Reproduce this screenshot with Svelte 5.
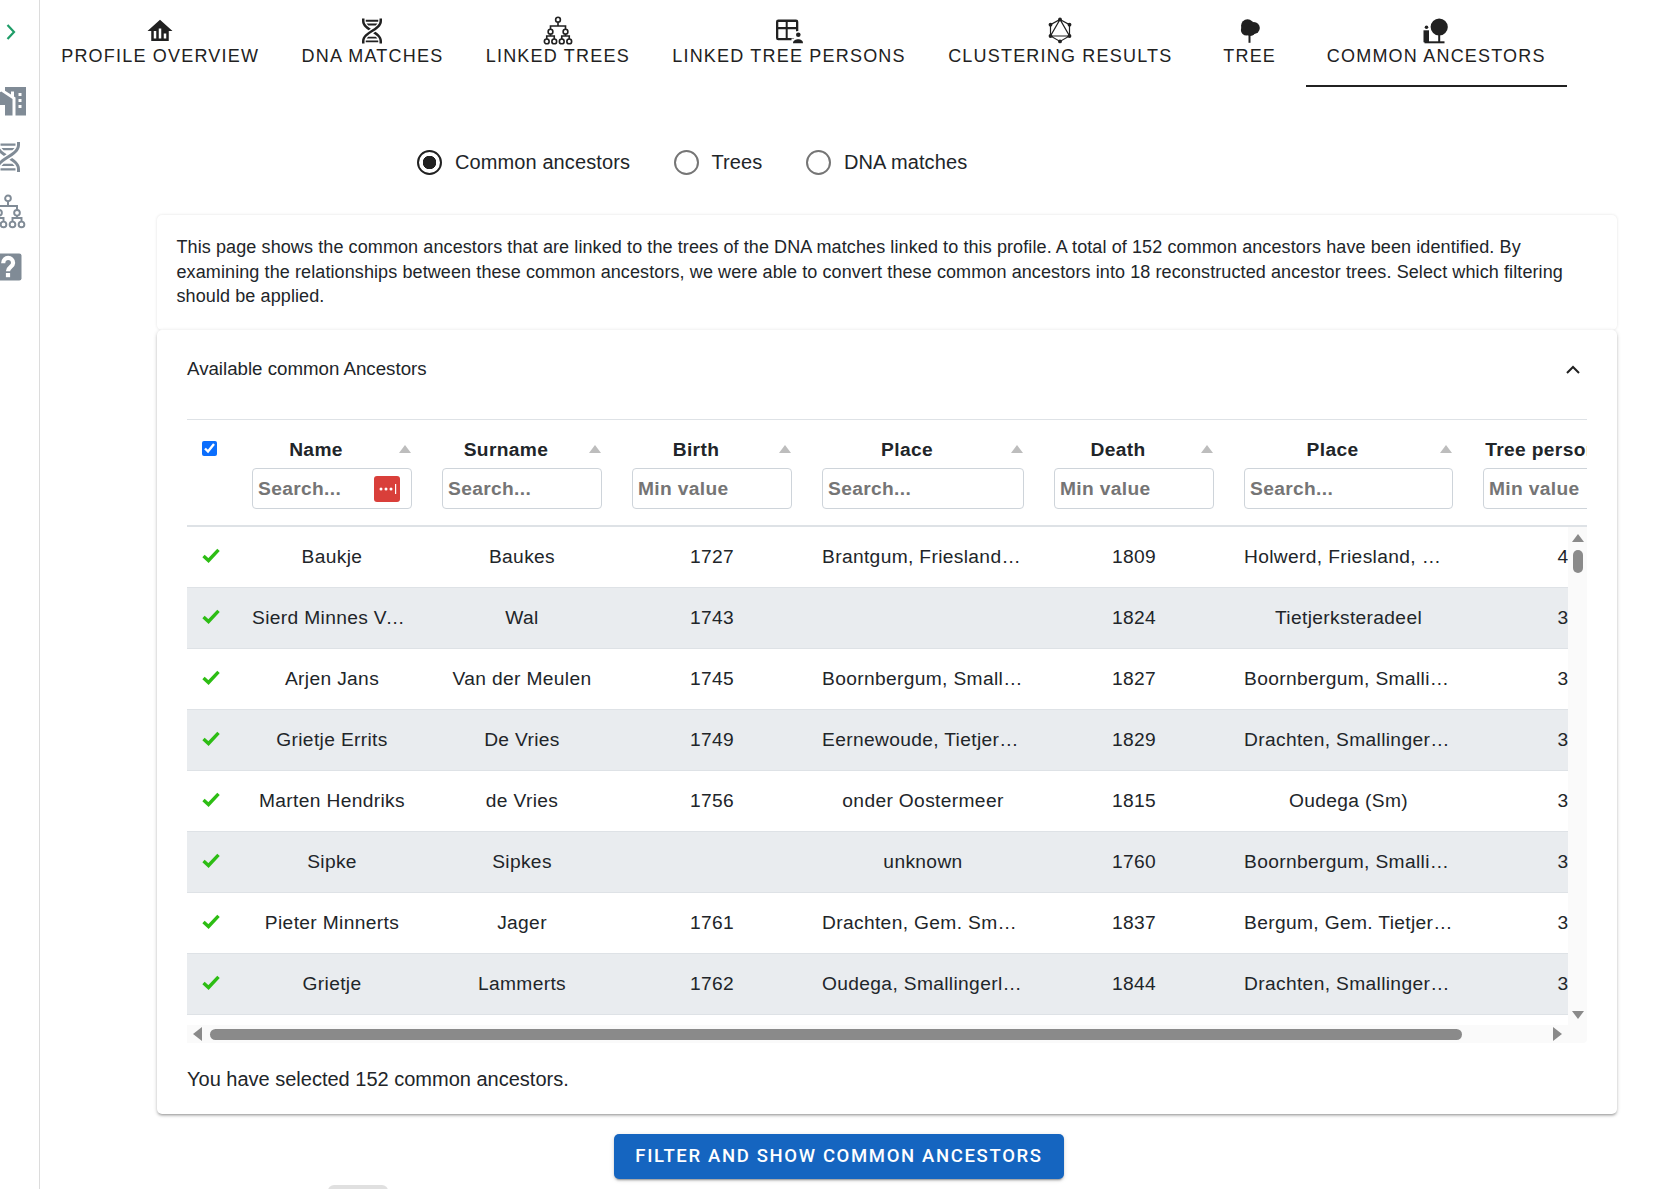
<script lang="ts">
  type Row = { name: string; surname: string; birth: string; bplace: string; death: string; dplace: string; persons: number };

  const tabs = [
    { label: 'PROFILE OVERVIEW', icon: 'home' },
    { label: 'DNA MATCHES', icon: 'dna' },
    { label: 'LINKED TREES', icon: 'family' },
    { label: 'LINKED TREE PERSONS', icon: 'table' },
    { label: 'CLUSTERING RESULTS', icon: 'graph' },
    { label: 'TREE', icon: 'tree' },
    { label: 'COMMON ANCESTORS', icon: 'ancestor' }
  ];

  const filters = ['Common ancestors', 'Trees', 'DNA matches'];
  let filter = $state('Common ancestors');
  let allSelected = $state(true);

  const columns = [
    { label: 'Name', hint: 'Search...' },
    { label: 'Surname', hint: 'Search...' },
    { label: 'Birth', hint: 'Min value' },
    { label: 'Place', hint: 'Search...' },
    { label: 'Death', hint: 'Min value' },
    { label: 'Place', hint: 'Search...' },
    { label: 'Tree persons', hint: 'Min value' }
  ];

  const rows: Row[] = [
    { name: 'Baukje', surname: 'Baukes', birth: '1727', bplace: 'Brantgum, Friesland, Nederland', death: '1809', dplace: 'Holwerd, Friesland, Nederland', persons: 4 },
    { name: 'Sierd Minnes Van der Wal', surname: 'Wal', birth: '1743', bplace: '', death: '1824', dplace: 'Tietjerksteradeel', persons: 3 },
    { name: 'Arjen Jans', surname: 'Van der Meulen', birth: '1745', bplace: 'Boornbergum, Smallingerland', death: '1827', dplace: 'Boornbergum, Smallingerland', persons: 3 },
    { name: 'Grietje Errits', surname: 'De Vries', birth: '1749', bplace: 'Eernewoude, Tietjerksteradeel', death: '1829', dplace: 'Drachten, Smallingerland', persons: 3 },
    { name: 'Marten Hendriks', surname: 'de Vries', birth: '1756', bplace: 'onder Oostermeer', death: '1815', dplace: 'Oudega (Sm)', persons: 3 },
    { name: 'Sipke', surname: 'Sipkes', birth: '', bplace: 'unknown', death: '1760', dplace: 'Boornbergum, Smallingerland', persons: 3 },
    { name: 'Pieter Minnerts', surname: 'Jager', birth: '1761', bplace: 'Drachten, Gem. Smallingerland', death: '1837', dplace: 'Bergum, Gem. Tietjerksteradeel', persons: 3 },
    { name: 'Grietje', surname: 'Lammerts', birth: '1762', bplace: 'Oudega, Smallingerland', death: '1844', dplace: 'Drachten, Smallingerland', persons: 3 }
  ];
</script>

{#snippet icon(name: string)}
  {#if name === 'home'}
    <svg viewBox="0 0 24 24"><path d="M12 3L2 12H5V20H19V12H22L12 3M9 18H7V12H9V18M13 18H11V10H13V18M17 18H15V14H17V18Z" /></svg>
  {:else if name === 'city'}
    <svg viewBox="0 0 24 24"><path d="M0,21V10L7.5,5L15,10V21H10V14H5V21H0M24,2V21H17V8.93L16,8.31V5H14V7.07L10,4.57V2H24M21,14H19V16H21V14M21,10H19V12H21V10M21,6H19V8H21V6Z" /></svg>
  {:else if name === 'dna'}
    <svg viewBox="0 0 24 24"><path d="M4 2H6V4C6 5.44 6.68 6.61 7.88 7.78C8.74 8.61 9.89 9.41 11.09 10.2L9.26 11.39C8.27 10.72 7.31 10 6.5 9.21C5.07 7.82 4 6.1 4 4V2M18 2H20V4C20 6.1 18.93 7.82 17.5 9.21C16.09 10.59 14.29 11.73 12.54 12.84C10.79 13.96 9.09 15.05 7.88 16.22C6.68 17.39 6 18.56 6 20V22H4V20C4 17.9 5.07 16.18 6.5 14.79C7.91 13.41 9.71 12.27 11.46 11.16C13.21 10.04 14.91 8.95 16.12 7.78C17.32 6.61 18 5.44 18 4V2M14.74 12.61C15.73 13.28 16.69 14 17.5 14.79C18.93 16.18 20 17.9 20 20V22H18V20C18 18.56 17.32 17.39 16.12 16.22C15.26 15.39 14.11 14.59 12.91 13.8L14.74 12.61M7 3H17V4L16.94 4.5H7.06L7 4V3M7.68 6H16.32C16.08 6.34 15.8 6.69 15.42 7.06L14.91 7.5H9.07L8.58 7.06C8.2 6.69 7.92 6.34 7.68 6M9.07 16.5H14.93L15.42 16.94C15.8 17.31 16.08 17.66 16.32 18H7.68C7.92 17.66 8.2 17.31 8.58 16.94L9.07 16.5M7.06 19.5H16.94L17 20V21H7V20L7.06 19.5Z" /></svg>
  {:else if name === 'family'}
    <svg viewBox="0 0 24 24" class="outline">
      <circle cx="12" cy="2.9" r="1.9" />
      <circle cx="6" cy="12.5" r="1.9" />
      <circle cx="18" cy="12.5" r="1.9" />
      <circle cx="3" cy="20.3" r="1.9" />
      <circle cx="9" cy="20.3" r="1.9" />
      <circle cx="15" cy="20.3" r="1.9" />
      <circle cx="21" cy="20.3" r="1.9" />
      <path d="M12 4.8V8M6 10.6V8H18V10.6M6 14.4V16M3 18.4V16H9V18.4M18 14.4V16M15 18.4V16H21V18.4" />
    </svg>
  {:else if name === 'table'}
    <svg viewBox="0 0 30 30">
      <path fill-rule="evenodd" d="M4.3 3.5H22A2.3 2.3 0 0 1 24.3 5.8V22A2.3 2.3 0 0 1 22 24.3H4.3A2.3 2.3 0 0 1 2 22V5.800A2.3 2.3 0 0 1 4.3 3.5ZM4.3 6V11H11.700V6ZM13.700 6V11H22V6ZM4.300 13.300V21.900H11.700V13.300ZM13.700 13.300V21.900H22V13.300Z" />
      <circle cx="24.300" cy="20" r="5" fill="#fff" />
      <rect x="17.500" y="22.500" width="12.500" height="6" fill="#fff" />
      <circle cx="24.300" cy="18.700" r="2.300" />
      <path d="M19 27.200C19 24.200 21.800 23.200 24.200 23.200C26.600 23.200 29 24.200 29 27.200Z" />
    </svg>
  {:else if name === 'graph'}
    <svg viewBox="0 0 30 30" class="graph">
      <path d="M15 3.400L24.500 8.700V20L15 25.400L5.500 20V8.700ZM15 3.400L24.500 20H5.500Z" />
      <circle cx="15" cy="3.400" r="1.900" />
      <circle cx="24.500" cy="8.700" r="1.900" />
      <circle cx="24.500" cy="20" r="1.900" />
      <circle cx="15" cy="25.400" r="1.900" />
      <circle cx="5.500" cy="20" r="1.900" />
      <circle cx="5.500" cy="8.700" r="1.900" />
    </svg>
  {:else if name === 'tree'}
    <svg viewBox="0 0 30 30">
      <circle cx="12.500" cy="9.800" r="6.500" />
      <circle cx="18.800" cy="12" r="6" />
      <circle cx="11.500" cy="14" r="5.600" />
      <circle cx="15.500" cy="15" r="5" />
      <rect x="13.500" y="18" width="2" height="8.800" />
    </svg>
  {:else if name === 'ancestor'}
    <svg viewBox="0 0 30 30">
      <circle cx="18.200" cy="11" r="8.600" />
      <rect x="17.200" y="17" width="2" height="9" />
      <rect x="3.500" y="25.300" width="20" height="2" />
      <circle cx="5.500" cy="11.300" r="1.800" />
      <rect x="2.500" y="14.300" width="5.500" height="12" />
    </svg>
  {:else if name === 'help'}
    <svg viewBox="0 0 24 24">
      <rect x="3" y="3" width="18" height="18" rx="1.500" />
      <path class="mark" d="M8.800 9.500C8.800 4.600 15.400 5 15.400 9.300C15.400 11.900 12 11.900 12 14.800" />
      <rect class="dot" x="10.600" y="16" width="2.800" height="2.800" />
    </svg>
  {/if}
{/snippet}

<div class="page">
  <aside class="side">
    <svg class="chevron" viewBox="0 0 10 16"><path d="M1.500 1L8 8L1.500 15" /></svg>
    <nav class="side-icons">
      <span class="side-icon">{@render icon('city')}</span>
      <span class="side-icon">{@render icon('dna')}</span>
      <span class="side-icon">{@render icon('family')}</span>
      <span class="side-icon">{@render icon('help')}</span>
    </nav>
  </aside>

  <main class="main">
    <div class="tabs">
      {#each tabs as tab, i}
        <div class="tab" class:active={i === tabs.length - 1}>
          {@render icon(tab.icon)}
          <span>{tab.label}</span>
        </div>
      {/each}
    </div>

    <div class="filters">
      {#each filters as f}
        <label class="radio">
          <input type="radio" name="filter" value={f} bind:group={filter} />
          {f}
        </label>
      {/each}
    </div>

    <section class="card intro">
      This page shows the common ancestors that are linked to the trees of the DNA matches linked to this profile. A total of 152 common ancestors have been identified. By examining the relationships between these common ancestors, we were able to convert these common ancestors into 18 reconstructed ancestor trees. Select which filtering should be applied.
    </section>

    <section class="card panel">
      <div class="panel-head">
        <span>Available common Ancestors</span>
        <svg class="collapse" viewBox="0 0 14 9"><path d="M1 8L7 2L13 8" /></svg>
      </div>

      <div class="grid">
        <div class="head">
          <div class="select-head">
            <input type="checkbox" bind:checked={allSelected} />
          </div>
          {#each columns as col, i}
            <div class="th">
              <div class="th-label">
                <b>{col.label}</b>
                <i class="sort"></i>
              </div>
              <div class="search">
                <input placeholder={col.hint} />
                {#if i === 0}
                  <svg class="lastpass" viewBox="0 0 26 26">
                    <rect width="26" height="26" rx="3" />
                    <circle cx="7" cy="13" r="1.500" />
                    <circle cx="12" cy="13" r="1.500" />
                    <circle cx="17" cy="13" r="1.500" />
                    <rect x="21" y="8" width="1.200" height="10" />
                  </svg>
                {/if}
              </div>
            </div>
          {/each}
        </div>

        <div class="body">
          <div class="rows">
            {#each rows as row, i}
              <div class="row" class:odd={i % 2 === 1}>
                <div class="td tick">
                  <svg viewBox="0 0 18 15"><path d="M1.500 8L6.500 12.500L16.500 1.800" /></svg>
                </div>
                <div class="td">{row.name}</div>
                <div class="td">{row.surname}</div>
                <div class="td">{row.birth}</div>
                <div class="td">{row.bplace}</div>
                <div class="td">{row.death}</div>
                <div class="td">{row.dplace}</div>
                <div class="td">{row.persons}</div>
              </div>
            {/each}
          </div>
          <div class="vscroll">
            <i class="arrow up"></i>
            <i class="vthumb"></i>
            <i class="arrow down"></i>
          </div>
        </div>

        <div class="hscroll">
          <i class="arrow left"></i>
          <i class="hthumb"></i>
          <i class="arrow right"></i>
        </div>
      </div>

      <p class="summary">You have selected 152 common ancestors.</p>
    </section>

    <button class="apply">FILTER AND SHOW COMMON ANCESTORS</button>
    <div class="chip"></div>
  </main>
</div>

<style>
  :global(body) {
    margin: 0;
    background: #fff;
    overflow: hidden;
  }

  .page {
    display: flex;
    height: 100vh;
    overflow: hidden;
    font-family: "Liberation Sans", Arial, sans-serif;
    color: #212529;
  }

  .side {
    flex: 0 0 39px;
    border-right: 1px solid #dcdcdc;
    overflow: hidden;
  }

  .chevron {
    display: block;
    width: 10px;
    height: 16px;
    margin: 24px 0 0 5.500px;
    fill: none;
    stroke: #1f9d68;
    stroke-width: 2.200;
  }

  .side-icons {
    display: flex;
    flex-direction: column;
    gap: 19px;
    margin: 44px 0 0 -10px;
    fill: #808b96;
  }

  .side-icon {
    display: block;
    width: 36px;
    height: 36px;
    color: #808b96;
  }

  .side-icon svg {
    display: block;
    width: 36px;
    height: 36px;
  }

  .main {
    flex: 1;
    min-width: 0;
  }

  .tabs {
    display: flex;
    height: 87px;
  }

  .tab {
    box-sizing: border-box;
    min-width: 112px;
    padding: 16px 21.200px 0;
    display: flex;
    flex-direction: column;
    align-items: center;
    font-size: 18px;
    line-height: 18px;
    letter-spacing: 1.200px;
    color: #212121;
    fill: #212121;
    white-space: nowrap;
  }

  .tab span {
    margin-top: 1px;
  }

  .tab.active {
    border-bottom: 2.500px solid #212121;
  }

  .tab svg {
    width: 30px;
    height: 30px;
    display: block;
    flex: none;
  }

  .outline {
    fill: none;
    stroke: currentColor;
    stroke-width: 1.300;
  }

  .graph path {
    fill: none;
    stroke: #212121;
    stroke-width: 1.200;
  }

  .mark {
    fill: none;
    stroke: #fff;
    stroke-width: 2.800;
  }

  .dot {
    fill: #fff;
  }

  .filters {
    display: flex;
    gap: 43.500px;
    margin: 63px 0 41px 377px;
    height: 24px;
  }

  .radio {
    display: flex;
    align-items: center;
    gap: 13px;
    font-size: 20px;
    line-height: 24px;
    letter-spacing: 0.100px;
    white-space: nowrap;
  }

  .radio input {
    appearance: none;
    box-sizing: border-box;
    width: 25px;
    height: 25px;
    margin: 0;
    border: 2px solid #757575;
    border-radius: 50%;
    background: #fff;
  }

  .radio input:checked {
    border-color: #212121;
    background: radial-gradient(circle, #212121 0 6.500px, #fff 7px);
  }

  .card {
    box-sizing: border-box;
    width: 1460px;
    margin-left: 117px;
    background: #fff;
    border-radius: 5px;
  }

  .intro {
    height: 115px;
    padding: 20px 19px 0 19.500px;
    font-size: 18px;
    line-height: 24.500px;
    letter-spacing: 0.100px;
    box-shadow: 0 0 3px rgba(0, 0, 0, 0.12);
  }

  .panel {
    height: 784px;
    padding: 0 30px;
    box-shadow: 0 2px 3px -1px rgba(0, 0, 0, 0.35), 0 1px 4px rgba(0, 0, 0, 0.16);
  }

  .panel-head {
    display: flex;
    justify-content: space-between;
    align-items: center;
    height: 89px;
    padding: 0 7px 11px 0;
    box-sizing: border-box;
    font-size: 18.700px;
  }

  .collapse {
    width: 14px;
    height: 9px;
    fill: none;
    stroke: #212121;
    stroke-width: 2;
  }

  .grid {
    --cols: 50px 190px 190px 190px 232px 190px 239px 190px;
    overflow: hidden;
    border-top: 1px solid #dee2e6;
    font-size: 19.200px;
    letter-spacing: 0.350px;
  }

  .head,
  .row {
    display: grid;
    grid-template-columns: var(--cols);
  }

  .head {
    height: 107px;
    box-sizing: border-box;
    border-bottom: 2px solid #dee2e6;
  }

  .select-head {
    padding: 21px 0 0 15px;
  }

  .select-head input {
    display: block;
    width: 15px;
    height: 15px;
    margin: 0;
    accent-color: #0b6efd;
  }

  .th {
    padding: 19px 15px 0;
    min-width: 0;
  }

  .th-label {
    display: flex;
    height: 22px;
    line-height: 22px;
    margin-bottom: 7px;
  }

  .th-label b {
    flex: 1;
    text-align: center;
    white-space: nowrap;
  }

  .sort {
    flex: 0 0 32px;
    height: 22px;
    position: relative;
  }

  .sort::after {
    content: "";
    position: absolute;
    right: 1px;
    top: 6px;
    border-left: 6.500px solid transparent;
    border-right: 6.500px solid transparent;
    border-bottom: 8px solid #bdbdbd;
  }

  .search {
    position: relative;
  }

  .search input {
    display: block;
    box-sizing: border-box;
    width: 100%;
    height: 41px;
    padding: 0 5px;
    border: 1px solid #ced4da;
    border-radius: 4px;
    font: inherit;
    font-weight: 700;
    letter-spacing: inherit;
    color: #212529;
    outline: none;
  }

  .search input::placeholder {
    color: #757575;
    opacity: 1;
  }

  .lastpass {
    position: absolute;
    left: 122px;
    top: 8px;
    width: 26px;
    height: 26px;
    fill: #fff;
  }

  .lastpass > rect:first-child {
    fill: #d93f3a;
  }

  .body {
    display: flex;
    height: 498px;
  }

  .rows {
    width: 1381px;
    flex: none;
    overflow: hidden;
  }

  .row {
    height: 61px;
    box-sizing: border-box;
    border-bottom: 1px solid #dee2e6;
  }

  .row.odd {
    background: #e9ecef;
  }

  .td {
    padding: 0 15px;
    line-height: 60px;
    text-align: center;
    white-space: nowrap;
    overflow: hidden;
    text-overflow: ellipsis;
    min-width: 0;
  }

  .tick {
    padding: 0 0 0 15px;
    display: flex;
    align-items: center;
  }

  .tick svg {
    width: 18px;
    height: 15px;
    margin-top: -4px;
    fill: none;
    stroke: #2dbd14;
    stroke-width: 3.400;
  }

  .vscroll {
    flex: 1;
    background: #fafafa;
    display: flex;
    flex-direction: column;
    align-items: center;
    padding-top: 7px;
  }

  .vthumb {
    width: 10px;
    height: 23px;
    margin-top: 8px;
    border-radius: 5px;
    background: #8a8a8a;
  }

  .arrow {
    display: block;
    width: 0;
    height: 0;
    border: 6px solid transparent;
  }

  .arrow.up {
    border-top: 0;
    border-bottom: 8px solid #8a8a8a;
  }

  .arrow.down {
    border-bottom: 0;
    border-top: 8px solid #8a8a8a;
    margin-top: auto;
    margin-bottom: 6px;
  }

  .arrow.left {
    border-width: 7px;
    border-left: 0;
    border-right: 9px solid #8a8a8a;
  }

  .arrow.right {
    border-width: 7px;
    border-right: 0;
    border-left: 9px solid #8a8a8a;
    margin-left: 91px;
  }

  .hscroll {
    display: flex;
    align-items: center;
    height: 18px;
    padding-left: 6px;
    background: #fafafa;
    border-radius: 0 0 4px 0;
  }

  .hthumb {
    flex: 0 0 1252px;
    height: 11px;
    margin-left: 8px;
    border-radius: 6px;
    background: #8a8a8a;
  }

  .summary {
    margin: 24px 0 0;
    font-size: 20px;
    line-height: 24px;
  }

  .apply {
    display: block;
    width: 450px;
    height: 45px;
    margin: 20px 0 0 574px;
    padding: 0 0 2px;
    border: 0;
    border-radius: 5px;
    background: #1565c0;
    color: #fff;
    font-family: Roboto, sans-serif;
    font-size: 18.500px;
    font-weight: 500;
    letter-spacing: 1.650px;
    box-shadow: 0 3px 1px -2px rgba(0, 0, 0, 0.2), 0 2px 2px rgba(0, 0, 0, 0.14), 0 1px 5px rgba(0, 0, 0, 0.12);
  }

  .chip {
    width: 60px;
    height: 20px;
    margin: 6px 0 0 288px;
    border-radius: 6px 6px 0 0;
    background: #e0e0e0;
  }
</style>
